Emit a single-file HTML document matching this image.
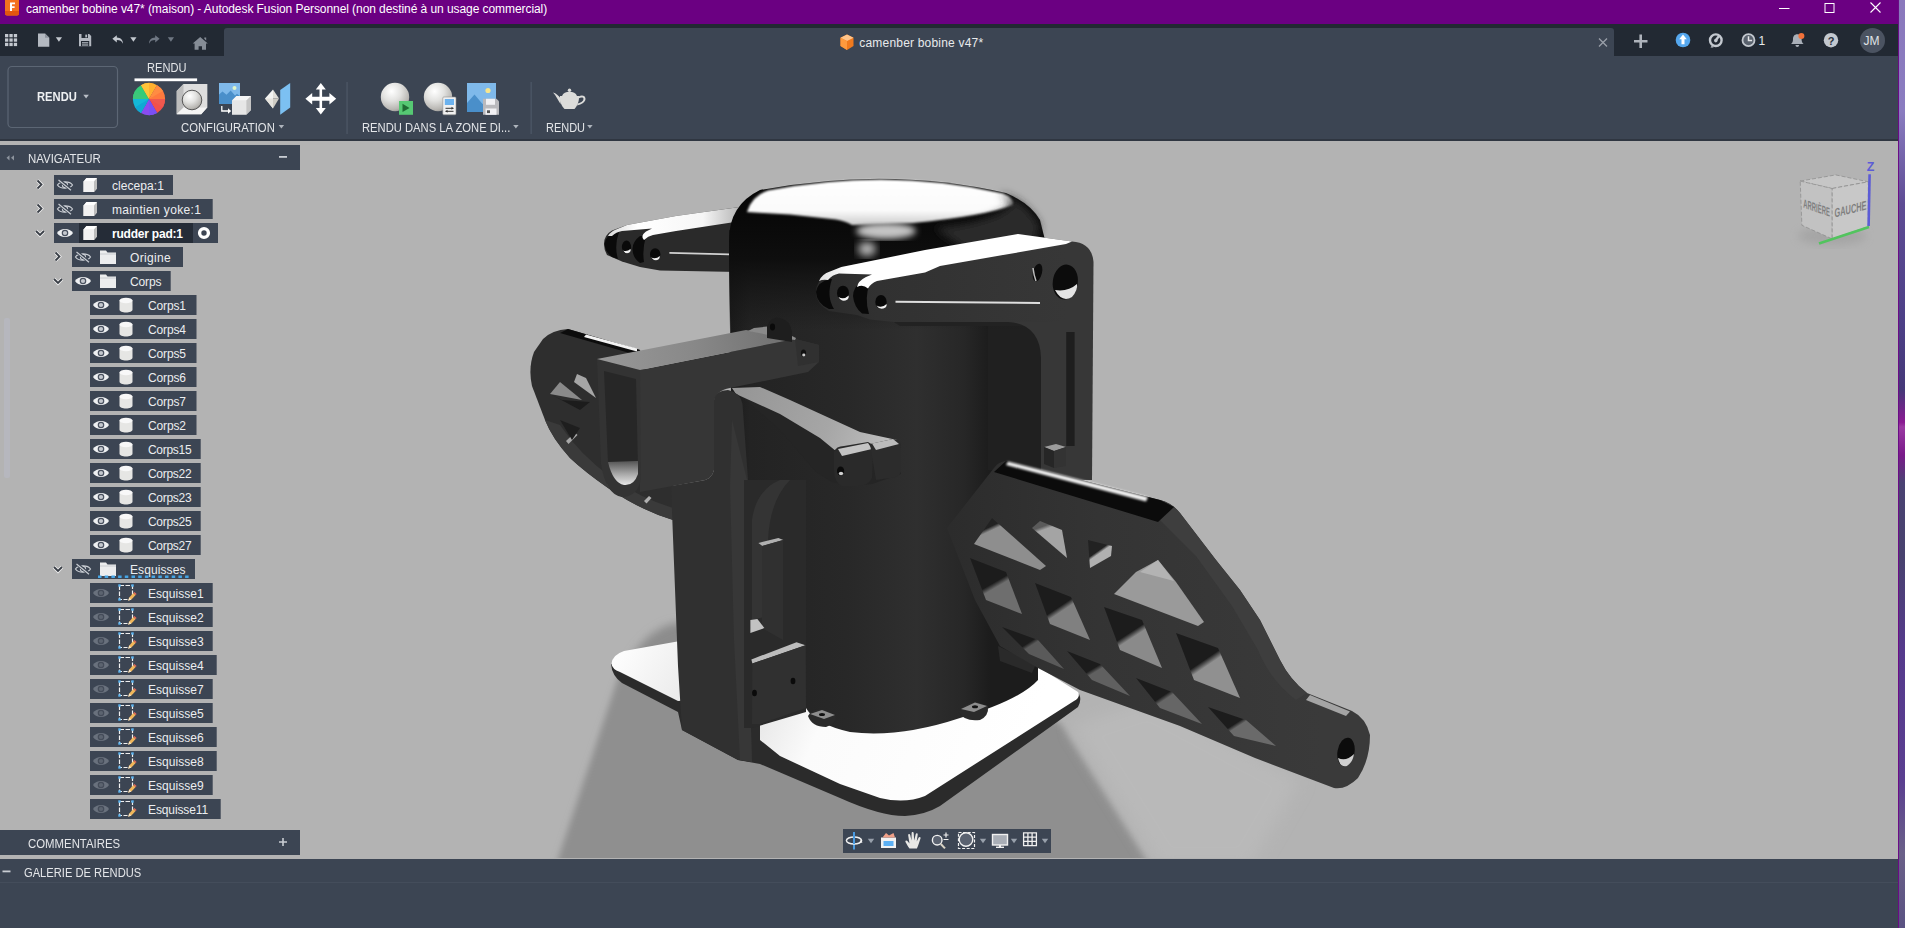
<!DOCTYPE html>
<html lang="fr">
<head>
<meta charset="utf-8">
<title>camenber bobine v47* (maison) - Autodesk Fusion Personnel</title>
<style>
*{box-sizing:border-box;margin:0;padding:0}
html,body{width:1905px;height:928px;overflow:hidden;background:#b3b3b3;font-family:"Liberation Sans",sans-serif;}
#app{position:absolute;left:0;top:0;width:1905px;height:928px;overflow:hidden}
.abs{position:absolute}
#wall{left:1898px;top:0;width:7px;height:928px;border-left:1px solid #6b0b86;background:linear-gradient(180deg,#8a78bc 0,#8a7cc0 12%,#5e4c94 22%,#4c3f86 35%,#453878 42%,#8a1a92 45.500%,#9a3aa2 46%,#7a1a8a 49%,#4a4272 52%,#48426e 60%,#553a8c 70%,#5a3f90 84%,#6a6088 92%,#5a5282 100%)}
#title{left:0;top:0;width:1898px;height:24px;background:#6b0082;color:#fff;font-size:12px}
#title .t{position:absolute;left:26px;top:2px;line-height:14px;white-space:nowrap;letter-spacing:-0.07px}
#row2{left:0;top:24px;width:1898px;height:32px;background:#222933}
#tabbar{left:224px;top:28px;width:1390px;height:28px;background:#3c4553;border-radius:3px 3px 0 0}
#ribbon{left:0;top:56px;width:1898px;height:85px;background:#3c4553}
#canvas{left:0;top:141px;width:1898px;height:718px;background:#b3b3b3}
#bottom{left:0;top:859px;width:1898px;height:69px;background:#3c4553}
.lbl{color:#e4e6e9;font-size:12px;white-space:nowrap;line-height:14px}
.navhdr{background:#3c4553;color:#e4e6e9;font-size:12px}
.row{position:absolute;height:20px;background:#3c4553;color:#eceef0;font-size:12px;line-height:20px;white-space:nowrap}
.row span{position:absolute;top:1px}
</style>
</head>
<body>
<div id="app">
<div id="wall" class="abs"></div>
<div id="title" class="abs"><div class="t">camenber bobine v47* (maison) - Autodesk Fusion Personnel (non destiné à un usage commercial)</div></div>
<div id="row2" class="abs"></div>
<div id="tabbar" class="abs"></div>
<div id="ribbon" class="abs"></div>
<div id="canvas" class="abs"></div>
<div id="rb" class="abs" style="left:0;top:138.500px;width:1898px;height:2.500px;background:#2f3641"></div>
<div id="bottom" class="abs"></div>
<!--CHROME-->
<svg class="abs" style="left:0;top:0" width="1898" height="141" viewBox="0 0 1898 141">
<defs>
<radialGradient id="sph" cx="0.38" cy="0.3" r="0.75"><stop offset="0" stop-color="#ffffff"/><stop offset="0.45" stop-color="#e2e2e0"/><stop offset="0.85" stop-color="#b8b6b2"/><stop offset="1" stop-color="#9a9894"/></radialGradient>
<linearGradient id="cubeo" x1="0" y1="0" x2="1" y2="1"><stop offset="0" stop-color="#ffb15a"/><stop offset="1" stop-color="#f06a12"/></linearGradient>
</defs>
<!-- app icon -->
<path d="M5 0h14v13.5q0 2-2 2h-10q-2 0-2-2z" fill="#f4711f"/>
<path d="M5 11h14v2.500q0 2-2 2h-10q-2 0-2-2z" fill="#e2560f"/>
<path d="M10 2.500h5v1.800h-3v2h2.600v1.700h-2.600v3h-2z" fill="#fff"/>
<!-- window controls -->
<path d="M1779 8.500h10.500" stroke="#fff" stroke-width="1"/>
<rect x="1825" y="3.500" width="9" height="9" fill="none" stroke="#fff" stroke-width="1"/>
<path d="M1870.500 2.500l10 10m0-10l-10 10" stroke="#fff" stroke-width="1.100"/>
<!-- QAT -->
<g fill="#c3c8cf">
<rect x="5" y="34" width="3.300" height="3.300"/><rect x="9.400" y="34" width="3.300" height="3.300"/><rect x="13.800" y="34" width="3.300" height="3.300"/>
<rect x="5" y="38.400" width="3.300" height="3.300"/><rect x="9.400" y="38.400" width="3.300" height="3.300"/><rect x="13.800" y="38.400" width="3.300" height="3.300"/>
<rect x="5" y="42.800" width="3.300" height="3.300"/><rect x="9.400" y="42.800" width="3.300" height="3.300"/><rect x="13.800" y="42.800" width="3.300" height="3.300"/>
</g>
<path d="M38 33.500h7l4.300 4.300v9h-11.300z" fill="#b4b9c1"/><path d="M45 33.500v4.300h4.300z" fill="#8e949e"/>
<path d="M55.800 37.200h6.200l-3.100 4.600z" fill="#c3c8cf"/>
<path d="M79 34h10.200l2 2v10.200h-12.200z" fill="#b4b9c1"/><rect x="81.500" y="34" width="6.500" height="4" fill="#222933"/><rect x="85.300" y="34.600" width="1.800" height="2.800" fill="#b4b9c1"/><rect x="81" y="41" width="8.200" height="5.200" fill="#222933"/><rect x="82" y="42.200" width="6.200" height="1.200" fill="#b4b9c1"/><rect x="82" y="44.400" width="6.200" height="1.200" fill="#b4b9c1"/>
<path d="M116.800 35.200l-4.400 3.600 4.400 3.600v-2.400c3.200 0 5 1 6.200 3.800 0-4-2.200-6.200-6.200-6.400z" fill="#c3c8cf"/>
<path d="M130.300 37.200h6.200l-3.100 4.600z" fill="#c3c8cf"/>
<path d="M155.200 35.200l4.400 3.600-4.400 3.600v-2.400c-3.200 0-5 1-6.200 3.800 0-4 2.200-6.200 6.200-6.400z" fill="#6f7783"/>
<path d="M167.800 37.200h6.200l-3.100 4.600z" fill="#6f7783"/>
<path d="M200.200 37l7.600 6.600h-1.800v6.200h-4v-3.600h-3.400v3.600h-4v-6.200h-1.900zM204.300 37.600h1.900v2.800l-1.900-1.600z" fill="#858c96"/>
<!-- tab -->
<path d="M847 34.500l6.500 3.200v8.300l-6.500 4-6.500-4v-8.300z" fill="#f07a1e"/><path d="M847 34.500l6.500 3.200-6.500 3.300-6.500-3.300z" fill="#ffc48a"/><path d="M847 41v9l-6.500-4v-8.300z" fill="#ff9a3d"/>
<path d="M1599 38.500l8 8m0-8l-8 8" stroke="#9aa0a9" stroke-width="1.300"/>
<path d="M1634 41.200h13.500M1640.700 34.500v13.500" stroke="#aeb3bb" stroke-width="2.600"/>
<!-- update -->
<circle cx="1683" cy="40" r="7.300" fill="#55a7ee"/><path d="M1683 34.600l3.800 4.600h-2.300v5h-3v-5h-2.300z" fill="#fff"/>
<!-- job status -->
<circle cx="1715.800" cy="40.200" r="5.800" fill="none" stroke="#c3c8cf" stroke-width="2.400"/><path d="M1715.800 40.200l3.200-4.200" stroke="#c3c8cf" stroke-width="2.400"/><circle cx="1715.800" cy="40.600" r="1.800" fill="#c3c8cf"/><path d="M1712 45.500l-1.500 2h3z" fill="#c3c8cf"/>
<!-- clock -->
<circle cx="1748.500" cy="40.200" r="6" fill="#59616d" stroke="#c3c8cf" stroke-width="1.800"/><path d="M1748.500 36.200v4.300h3.600" stroke="#e3e5e8" stroke-width="1.500" fill="none"/>
<!-- bell -->
<path d="M1797.300 34.200c3 0 4.300 2.300 4.300 5 0 2.600.8 3.700 2 4.800h-12.600c1.200-1.100 2-2.200 2-4.800 0-2.700 1.300-5 4.300-5z" fill="#a9afb8"/><path d="M1795.500 45h3.600c0 1.200-.8 1.900-1.800 1.900s-1.800-.7-1.800-1.900z" fill="#a9afb8"/><circle cx="1801.400" cy="36" r="3" fill="#f2713a"/>
<!-- help -->
<circle cx="1831" cy="40.200" r="7.200" fill="#c3c8cf"/>
<!-- avatar -->
<circle cx="1872.500" cy="40.400" r="12.500" fill="#4b5361"/>
<!-- RENDU button -->
<rect x="8" y="66.500" width="109.500" height="61" rx="4" fill="none" stroke="#5c6674" stroke-width="1.200"/>
<path d="M83.300 94.800h5.600l-2.800 3.600z" fill="#b9bec6"/>
<!-- tab underline -->
<rect x="134.500" y="78.400" width="62.600" height="2.800" fill="#fff"/>
<!-- color wheel -->
<g transform="translate(149 99.100) rotate(-30)">
<path d="M0 0L0-16.100A16.100 16.100 0 0 1 13.940-8.050z" fill="#ffb02e"/>
<path d="M0 0L13.940-8.050A16.100 16.100 0 0 1 13.940 8.050z" fill="#ff7a3d"/>
<path d="M0 0L13.940 8.050A16.100 16.100 0 0 1 0 16.100z" fill="#f2504c"/>
<path d="M0 0L0 16.100A16.100 16.100 0 0 1-13.940 8.050z" fill="#8a4cf0"/>
<path d="M0 0L-13.940 8.050A16.100 16.100 0 0 1-13.940-8.050z" fill="#14b8d8"/>
<path d="M0 0L-13.940-8.050A16.100 16.100 0 0 1 0-16.100z" fill="#34cc78"/>
<path d="M0 0L0-16.100A16.100 16.100 0 0 1 8.050-13.940z" fill="#ffc43a"/>
<path d="M0 0L13.940-8.050A16.100 16.100 0 0 1 16.100 0z" fill="#ff8c42"/>
<path d="M0 0L13.940 8.050A16.100 16.100 0 0 1 8.050 13.940z" fill="#f0584e"/>
<path d="M0 0L0 16.100A16.100 16.100 0 0 1-8.050 13.940z" fill="#7a50f4"/>
<path d="M0 0L-13.940 8.050A16.100 16.100 0 0 1-16.100 0z" fill="#10a8d4"/>
<path d="M0 0L-13.940-8.050A16.100 16.100 0 0 1-8.050-13.940z" fill="#3cc87a"/>
</g>
<!-- box sphere -->
<path d="M183.500 84h23.700v23.500l-6 6.700h-24.500v-23.200z" fill="#d9d9d9"/>
<path d="M183.500 84h23.700v23.500h-23.700z" fill="#dedede"/>
<path d="M176.700 91l6.800-7v23.500l-6.800 6.700z" fill="#bdbdbd"/>
<path d="M176.700 114.200l6.800-6.700h23.700l-6 6.700z" fill="#f4f4f4"/>
<circle cx="192" cy="100" r="9.800" fill="url(#sph)" stroke="#4a4a4a" stroke-width="0.900"/>
<!-- image + cube -->
<rect x="219" y="83" width="21" height="21" fill="#7fb9ea"/>
<path d="M219 104v-9.500l3.500-3 4 3.200 4.200-4.200 4.300 5 2-1.800 3 2.600v7.700z" fill="#4a8fca"/><circle cx="234.500" cy="88" r="2" fill="#dff5c8"/>
<path d="M232 100.500l4.500-4.500h14.500v14l-4.500 4.600h-14.500z" fill="#d6d6d6"/><path d="M232 100.500h14.500v14.100h-14.500z" fill="#e6e6e6"/><path d="M232 100.500l4.500-4.500h14.500l-4.500 4.500z" fill="#f6f6f6"/><path d="M246.500 100.500l4.500-4.500v14l-4.500 4.600z" fill="#c4c4c4"/>
<path d="M221.800 106v5h7" stroke="#fff" stroke-width="1.300" fill="none"/><path d="M228 108.300l3.200 2.700-3.200 2.700z" fill="#fff"/>
<!-- mirror -->
<path d="M265 98.500l8-9v19z" fill="#f4f4f2"/><path d="M273 89.500l6 9h-6z" fill="#e0ded8"/><path d="M273 98.500h6l-6 10z" fill="#cfccc4"/><path d="M265 98.500h8v10z" fill="#e6e4de"/>
<path d="M280.200 90l10-7v24.500l-10 7.200z" fill="#7cc0f2"/>
<!-- move -->
<g fill="#fff"><path d="M320.800 83l5 6.500h-3.700v7.300h7.300v-3.700l6.800 5.700-6.800 5.700v-3.700h-7.300v7.300h3.700l-5 6.500-5-6.500h3.700v-7.300h-7.300v3.700l-6.800-5.700 6.800-5.700v3.700h7.300v-7.300h-3.700z"/></g>
<path d="M278.700 125h5.400l-2.700 3.500z" fill="#aeb4bc"/>
<rect x="346.400" y="82" width="1.300" height="52" fill="#4d5766"/>
<!-- sphere play -->
<circle cx="395" cy="97" r="14.200" fill="url(#sph)"/>
<rect x="399" y="101" width="14" height="13.800" fill="#56c873"/><path d="M402.500 103.800l7 4.100-7 4.100z" fill="#1f6b33"/>
<circle cx="438" cy="97" r="14.200" fill="url(#sph)"/>
<rect x="442.800" y="97" width="13.200" height="17.800" rx="1" fill="#f1f1f1" stroke="#8d8d8d" stroke-width="0.600"/><rect x="444.800" y="99" width="9.200" height="6" fill="#6cb2ee"/><path d="M445.500 108.300h8M445.500 111.300h8" stroke="#333" stroke-width="1"/><path d="M451.500 106.800l2 1.500-2 1.500zM447.500 109.800l-2 1.500 2 1.500z" fill="#333"/>
<!-- image save -->
<rect x="467" y="83" width="29" height="29" fill="#7fb9ea"/><path d="M467 112v-9l7.500-8.500 8 9.500 2.500-2 11 10z" fill="#4a8fca"/><circle cx="488" cy="90.500" r="2.600" fill="#f7e58c"/>
<path d="M483 98.800h13.500l2.500 2.500v13.500h-16z" fill="#b9b9bd"/><rect x="486" y="98.800" width="9" height="6" fill="#f1f1f4"/><rect x="485.500" y="108.500" width="11" height="6.300" fill="#f1f1f4"/><rect x="487" y="110.300" width="3" height="2.800" fill="#555"/>
<path d="M513.200 125h5.400l-2.700 3.500z" fill="#aeb4bc"/>
<rect x="530.500" y="82" width="1.300" height="52" fill="#4d5766"/>
<!-- teapot -->
<g fill="#dcdcda"><path d="M560 96h19c.3 5.500-1.800 10-4.500 13h-10c-3-3-5-7.500-4.500-13z"/><path d="M562 96c1-3 4-4.200 7.500-4.200s6.500 1.200 7.500 4.200z"/><circle cx="569.500" cy="90.300" r="1.700"/><path d="M553 92.500c3 .5 5.500 3 8 6.500l-.5 5c-2.500-4-4.500-8.500-7.500-11.500z"/><path d="M578.500 96.500c3.500-2 7-.8 7 2.300 0 3.200-3.700 5.800-8.500 6.600l.7-1.900c3.300-.8 5.800-2.500 5.800-4.500 0-1.700-2.400-1.900-5-.6z"/></g>
<path d="M587.200 125h5.400l-2.700 3.500z" fill="#aeb4bc"/>
</svg>
<div class="abs lbl" id="t_tab" style="left:859.300px;top:35.500px;color:#e8eaec;letter-spacing:0.195px">camenber bobine v47*</div>
<div class="abs lbl" id="t_one" style="left:1758.500px;top:34px;color:#e8eaec">1</div>
<div class="abs lbl" id="t_q" style="left:1827.700px;top:33.500px;color:#2a313c;font-weight:bold;font-size:11px">?</div>
<div class="abs lbl" id="t_jm" style="left:1863.500px;top:33.500px;color:#e0e3e7">JM</div>
<div class="abs lbl" id="t_rb" style="left:37.400px;top:89.500px;font-weight:bold;color:#eef0f2;transform:scaleX(0.933);transform-origin:0 0">RENDU</div>
<div class="abs lbl" id="t_rt" style="left:146.700px;top:60.800px;transform:scaleX(0.923);transform-origin:0 0">RENDU</div>
<div class="abs lbl" id="t_cf" style="left:180.500px;top:120.900px;transform:scaleX(0.94);transform-origin:0 0">CONFIGURATION</div>
<div class="abs lbl" id="t_rz" style="left:361.600px;top:120.900px;transform:scaleX(0.9345);transform-origin:0 0">RENDU DANS LA ZONE DI...</div>
<div class="abs lbl" id="t_r2" style="left:545.600px;top:120.900px;transform:scaleX(0.914);transform-origin:0 0">RENDU</div>
<!--/CHROME-->
<!--MODEL-->
<svg class="abs" style="left:0;top:141px" width="1898" height="717" viewBox="0 141 1898 717"><defs><filter id="b2" x="-20%" y="-20%" width="140%" height="140%"><feGaussianBlur stdDeviation="2"/></filter><filter id="b4" x="-20%" y="-20%" width="140%" height="140%"><feGaussianBlur stdDeviation="4"/></filter><filter id="b8" x="-30%" y="-30%" width="160%" height="160%"><feGaussianBlur stdDeviation="8"/></filter><filter id="b3" x="-10%" y="-10%" width="120%" height="120%"><feGaussianBlur stdDeviation="3"/></filter><filter id="b1" x="-20%" y="-20%" width="140%" height="140%"><feGaussianBlur stdDeviation="1"/></filter><linearGradient id="pl1" gradientUnits="userSpaceOnUse" x1="611" y1="650" x2="690" y2="700"><stop offset="0" stop-color="#ffffff"/><stop offset="1" stop-color="#e9e9e9"/></linearGradient><linearGradient id="pl2" gradientUnits="userSpaceOnUse" x1="760" y1="700" x2="1000" y2="800"><stop offset="0" stop-color="#e6e6e6"/><stop offset="0.25" stop-color="#fbfbfb"/><stop offset="1" stop-color="#ffffff"/></linearGradient><linearGradient id="la" gradientUnits="userSpaceOnUse" x1="604" y1="0" x2="736" y2="0"><stop offset="0" stop-color="#d4d4d4"/><stop offset="0.25" stop-color="#ffffff"/><stop offset="0.75" stop-color="#f6f6f6"/><stop offset="1" stop-color="#bcbcbc"/></linearGradient><linearGradient id="cyl" gradientUnits="userSpaceOnUse" x1="729" y1="0" x2="990" y2="0"><stop offset="0" stop-color="#1a1a1a"/><stop offset="0.08" stop-color="#232323"/><stop offset="0.45" stop-color="#282828"/><stop offset="0.72" stop-color="#2f2f2f"/><stop offset="0.9" stop-color="#272727"/><stop offset="1" stop-color="#1c1c1c"/></linearGradient><linearGradient id="capd" gradientUnits="userSpaceOnUse" x1="0" y1="200" x2="0" y2="330"><stop offset="0" stop-color="#060606"/><stop offset="0.450" stop-color="#0e0e0e"/><stop offset="1" stop-color="#141414" stop-opacity="0"/></linearGradient><linearGradient id="capw" gradientUnits="userSpaceOnUse" x1="0" y1="178" x2="0" y2="232"><stop offset="0" stop-color="#ffffff"/><stop offset="0.6" stop-color="#fbfbfb"/><stop offset="1" stop-color="#b4b4b4"/></linearGradient><linearGradient id="ras" gradientUnits="userSpaceOnUse" x1="815" y1="0" x2="1066" y2="0"><stop offset="0" stop-color="#2a2a2a"/><stop offset="0.25" stop-color="#313131"/><stop offset="1" stop-color="#373737"/></linearGradient><linearGradient id="ra" gradientUnits="userSpaceOnUse" x1="816" y1="0" x2="1072" y2="0"><stop offset="0" stop-color="#dcdcdc"/><stop offset="0.12" stop-color="#ffffff"/><stop offset="1" stop-color="#ffffff"/></linearGradient><linearGradient id="uh" gradientUnits="userSpaceOnUse" x1="0" y1="462" x2="0" y2="486"><stop offset="0" stop-color="#5a5a5a"/><stop offset="0.5" stop-color="#a8a8a8"/><stop offset="1" stop-color="#ececec"/></linearGradient><linearGradient id="bt" gradientUnits="userSpaceOnUse" x1="597" y1="360" x2="795" y2="340"><stop offset="0" stop-color="#989898"/><stop offset="0.5" stop-color="#888888"/><stop offset="1" stop-color="#6e6e6e"/></linearGradient><linearGradient id="ma" gradientUnits="userSpaceOnUse" x1="740" y1="389" x2="890" y2="440"><stop offset="0" stop-color="#969696"/><stop offset="0.6" stop-color="#a6a6a6"/><stop offset="1" stop-color="#bebebe"/></linearGradient><linearGradient id="pedg" gradientUnits="userSpaceOnUse" x1="950" y1="0" x2="1320" y2="0"><stop offset="0" stop-color="#2c2c2c"/><stop offset="0.4" stop-color="#343434"/><stop offset="1" stop-color="#3a3a3a"/></linearGradient><linearGradient id="c17" gradientUnits="userSpaceOnUse" x1="990" y1="518" x2="1004" y2="548"><stop offset="0" stop-color="#222"/><stop offset="0.24" stop-color="#222"/><stop offset="0.36" stop-color="#8e8e8e"/><stop offset="1" stop-color="#8e8e8e"/></linearGradient><linearGradient id="c18" gradientUnits="userSpaceOnUse" x1="1044" y1="520" x2="1054" y2="548"><stop offset="0" stop-color="#5a5a5a"/><stop offset="0.19" stop-color="#5a5a5a"/><stop offset="0.31" stop-color="#a4a4a4"/><stop offset="1" stop-color="#a4a4a4"/></linearGradient><linearGradient id="c19" gradientUnits="userSpaceOnUse" x1="1092" y1="542" x2="1106" y2="562"><stop offset="0" stop-color="#222"/><stop offset="0.44" stop-color="#222"/><stop offset="0.56" stop-color="#b0b0b0"/><stop offset="1" stop-color="#b0b0b0"/></linearGradient><linearGradient id="c20" gradientUnits="userSpaceOnUse" x1="1050" y1="590" x2="1074" y2="626"><stop offset="0" stop-color="#1c1c1c"/><stop offset="0.44" stop-color="#1c1c1c"/><stop offset="0.56" stop-color="#808080"/><stop offset="1" stop-color="#808080"/></linearGradient><linearGradient id="c21" gradientUnits="userSpaceOnUse" x1="1120" y1="614" x2="1146" y2="654"><stop offset="0" stop-color="#1c1c1c"/><stop offset="0.44" stop-color="#1c1c1c"/><stop offset="0.56" stop-color="#8a8a8a"/><stop offset="1" stop-color="#8a8a8a"/></linearGradient><linearGradient id="c22" gradientUnits="userSpaceOnUse" x1="1192" y1="640" x2="1222" y2="684"><stop offset="0" stop-color="#1c1c1c"/><stop offset="0.44" stop-color="#1c1c1c"/><stop offset="0.56" stop-color="#909090"/><stop offset="1" stop-color="#909090"/></linearGradient><linearGradient id="c23" gradientUnits="userSpaceOnUse" x1="1018" y1="632" x2="1036" y2="660"><stop offset="0" stop-color="#1c1c1c"/><stop offset="0.44" stop-color="#1c1c1c"/><stop offset="0.56" stop-color="#5a5a5a"/><stop offset="1" stop-color="#5a5a5a"/></linearGradient><linearGradient id="c24" gradientUnits="userSpaceOnUse" x1="1084" y1="656" x2="1102" y2="686"><stop offset="0" stop-color="#1c1c1c"/><stop offset="0.44" stop-color="#1c1c1c"/><stop offset="0.56" stop-color="#606060"/><stop offset="1" stop-color="#606060"/></linearGradient><linearGradient id="c25" gradientUnits="userSpaceOnUse" x1="1152" y1="684" x2="1172" y2="714"><stop offset="0" stop-color="#1c1c1c"/><stop offset="0.44" stop-color="#1c1c1c"/><stop offset="0.56" stop-color="#666"/><stop offset="1" stop-color="#666"/></linearGradient><linearGradient id="c26" gradientUnits="userSpaceOnUse" x1="1226" y1="712" x2="1244" y2="740"><stop offset="0" stop-color="#1c1c1c"/><stop offset="0.44" stop-color="#1c1c1c"/><stop offset="0.56" stop-color="#6a6a6a"/><stop offset="1" stop-color="#6a6a6a"/></linearGradient><linearGradient id="c27" gradientUnits="userSpaceOnUse" x1="984" y1="566" x2="1006" y2="604"><stop offset="0" stop-color="#1c1c1c"/><stop offset="0.44" stop-color="#1c1c1c"/><stop offset="0.56" stop-color="#6e6e6e"/><stop offset="1" stop-color="#6e6e6e"/></linearGradient></defs>
<path d="M620 672 L700 640 L1000 690 L1061 724 L1152 868 L555 868Z" fill="#8f8f8f" filter="url(#b3)"/>
<path d="M625 668 Q650 620 690 622 L690 690 Z" fill="#8c8c8c" filter="url(#b4)"/>
<path d="M1072 726 L1150 700 L1300 780 L1250 866 L1160 866Z" fill="#b9b9b9" filter="url(#b8)"/>
<path d="M611 664 Q612 676 622 683 L678 712 L682 730 L738 760 L760 764 L840 798 Q880 816 905 816 Q925 815 940 806 L1078 707 Q1082 700 1079 694 L1040 680 L700 640 Z" fill="#2b2b2b" />
<path d="M611.500 664 Q612 655 624 651 L680 641 L690 700 L678 701 L620 672 Q612 669 611.500 664Z" fill="url(#pl1)" />
<path d="M760 724 L806 706 L1040 668 L1078 692 Q1081 697 1074 701 L925 796 Q905 804 880 798 L840 784 L780 756 L760 740 Z" fill="url(#pl2)" />
<path d="M543 339 Q552 330 568 329 L640 350 L672 486 L673 520 Q640 510 608 488 Q585 472 570 458 Q552 438 545 420 L532 386 Q528 368 534 352 Z" fill="#2e2e2e" />
<path d="M545 420 Q552 438 570 458 Q585 472 608 488 Q640 510 673 520 L673 508 Q640 498 612 478 Q580 455 560 425 Z" fill="#3a3a3a" />
<path d="M568 329 L640 350 L640 356 L560 333Z" fill="#0c0c0c" />
<path d="M586 334.5 L637 348.5 L637 351.5 L584 337Z" fill="#f2f2f2" />
<path d="M577 374 L586 378 L596 398 L574 382Z" fill="#a6a6a6" />
<path d="M550 394 L560 382 L582 400Z" fill="#8a8a8a" />
<path d="M566 441 L575 432.5 L577.5 435 L568.5 444Z" fill="#a8a8a8" />
<path d="M552 395 L562 400 L590 402 L580 410Z" fill="#1c1c1c" />
<path d="M560 420 L580 428 L572 440Z" fill="#1e1e1e" />
<path d="M644 501 L649 496 L651.5 498 L646.5 503.5Z" fill="#b0b0b0" />
<path d="M607 484 L611 481 L613 484 L609 487Z" fill="#a0a0a0" />
<path d="M604 244 Q604 235 612 230.500 L627 225 L676 216 L738 207.200 L738 272 L660 270.500 L640 267 L622 261.500 L607 255 Q604 250 604 244Z" fill="#2a2a2a" />
<path d="M616 232 Q605 236 604.500 244 Q605 252 612 257 L618 259 Q614 246 619 232Z" fill="#0a0a0a" />
<path d="M640 236 Q632 242 632.500 250 Q633 258 640 263 L644 262 Q642 250 646 236 Z" fill="#0a0a0a" />
<path d="M608 236 Q610 232 616 229.500 L627 225 L676 216 L738 207.200 L738 221.500 L676 231 L653 235 Q648 236 644 240 Q640 236 646 231.500 L652 228.400 L622 231 Q616 232 612 236Z" fill="url(#la)" />
<ellipse cx="626.500" cy="247" rx="4.600" ry="6.500" fill="#090909"/>
<path d="M623 250.500 Q626 255 630 252 Q631 250.500 630.500 249 Q627 252 623 250.500Z" fill="#f0f0f0" />
<ellipse cx="655.200" cy="254.300" rx="5.200" ry="6" fill="#090909"/>
<path d="M651 257.500 Q655 262 659 259 Q660 257.500 659.800 256 Q656 259.500 651 257.500Z" fill="#f0f0f0" />
<path d="M669.4 252 L729.2 253.5 L729.2 255.3 L669.4 253.7Z" fill="#d2d2d2" />
<path d="M729 230 L990 230 L1038 300 L1038 680 Q1020 700 960 718 Q900 738 850 732 Q815 724 806 708 L806 480 L732 480 Z" fill="url(#cyl)" />
<path d="M988 300 L1042 300 L1042 470 L988 470Z" fill="#202020" />
<path d="M729 240 Q729 205 760 190 Q890 166 1006 193 Q1030 203 1040 220 L1045 240 L1045 330 L729 330 Z" fill="url(#capd)" />
<path d="M747 212 Q752 196 768 190.500 Q890 167 1003 193.500 Q1014 198 1013 205 Q985 216 913 223 L852 225 Q846 221 836 219.500 L790 214.500 Z" fill="url(#capw)" filter="url(#b1)"/>
<path d="M1000 193 Q1026 200 1040 226 L1034 246 L975 256 L935 228 Q995 222 1012 204Z" fill="#2c2c2c" filter="url(#b4)"/>
<ellipse cx="886" cy="231" rx="30" ry="8" fill="#c4c4c4" filter="url(#b3)"/>
<ellipse cx="867" cy="249" rx="9" ry="7" fill="#bdbdbd" filter="url(#b4)"/>
<path d="M1041 300 L1041 246 L1072 241.500 Q1092 243 1093.500 262 L1092 480 L1041 480 Z" fill="#373737" />
<path d="M1066.2 332 L1074.6 332 L1074.6 446 L1066.2 446Z" fill="#1e1e1e" />
<path d="M816 292 Q816 281 828 273 L841 267 L1018 234 L1072 241.500 L1066 244 L1066 322 L894 322 L870 319.600 L857 315 L829 311 Q816 304 816 292Z" fill="url(#ras)" />
<path d="M830 279 Q817 282 816 292 Q817 304 829 309 L834 309 Q826 296 832 279Z" fill="#090909" />
<path d="M861 281.500 Q853 288 853 296 Q854 307 862 313.500 L869 314 Q864 298 870 283 Z" fill="#090909" />
<path d="M819 281 Q822 274 830 271.500 L841.400 267 L925 250 L1018 234 L1072 241.500 L1066 244 L940 266 L925 272.400 L877 281 Q871 283 868 288.500 Q863 284 857 287 Q858 281 866 277 L872 274.400 L839 273.600 Q832 275 828 280 Q823 279 819 281Z" fill="url(#ra)" />
<ellipse cx="843" cy="293" rx="6" ry="7.300" fill="#080808"/>
<path d="M838.500 297 Q842 303 847.500 299.500 Q849 297.500 848.800 295.500 Q844 300 838.500 297Z" fill="#f4f4f4" />
<ellipse cx="881" cy="301.900" rx="5.700" ry="6.900" fill="#080808"/>
<path d="M876.500 305.500 Q880 311 885.500 307.500 Q887 306 886.600 304 Q882 308.500 876.500 305.500Z" fill="#f4f4f4" />
<path d="M895.5 300.7 L1040 302 L1040 304 L895.5 302.7Z" fill="#dedede" />
<path d="M894 322 L1041 322 L1041 326 L900 326Z" fill="#222222" />
<path d="M1008 322 Q1040 324 1041 358 L1041 322 Z" fill="#373737" />
<ellipse cx="1065.300" cy="282" rx="12.500" ry="17.500" fill="#0c0c0c" transform="rotate(8 1065.300 282)"/>
<path d="M1055 290 Q1062 303 1072 297 Q1078 290 1077 284 Q1068 292 1055 290Z" fill="#e4e4e4" />
<ellipse cx="1037.500" cy="272.500" rx="4.500" ry="9" fill="#0c0c0c" transform="rotate(14 1037.500 272.500)"/>
<path d="M1033 268 Q1034 276 1036 281" fill="none" stroke="#bdbdbd" stroke-width="1.500"/>
<path d="M1044 447 L1056 444 L1066 447 L1054 451Z" fill="#9c9c9c" />
<path d="M1044 447 L1054 451 L1054 468 L1044 464Z" fill="#262626" />
<path d="M1054 451 L1066 447 L1066 466 L1054 468Z" fill="#333" />
<path d="M640 370 L795 339 L819 345 L819 362 L808 372 L730 388 Q716 390 714 402 L714 470 Q712 480 700 481 L640 492 Z" fill="#363636" />
<path d="M597 359 L640 370 L641 478 Q638 497 622 497 Q606 495 601 464 Z" fill="#333333" />
<path d="M604 371 L636 379 L638 470 L608 462Z" fill="#272727" />
<path d="M608 462 L638 461 L638 474 Q634 486 624 485 Q613 483 608 462Z" fill="url(#uh)" />
<path d="M597 359 L746 330 L795 339 L640 370Z" fill="url(#bt)" />
<path d="M795 339 L819 345 L819 362 L798 366Z" fill="#303030" />
<path d="M754 328 L772 326 L796 338 L795 340 L748 331Z" fill="#8a8a8a" />
<ellipse cx="803.500" cy="353" rx="2.600" ry="3.600" fill="#111"/><ellipse cx="803.800" cy="355" rx="1.600" ry="1.400" fill="#ccc"/>
<path d="M767 338 L767 326 Q771 316 780 318 Q790 320 792 332 L792 342 Z" fill="#1e1e1e" />
<ellipse cx="772.500" cy="327" rx="2.600" ry="3.400" fill="#0a0a0a"/>
<path d="M736 394 L746 400 L780 430 L816 472 L832 482 L848 486 L872 484 L901 474 L901 444 L860 432 L790 400 L740 389 Z" fill="#252525" />
<path d="M732 388 L760 387 L790 400 L860 432 L897 440 L872 447 L834.600 450 L820 438 L780 414 L736 394 Z" fill="url(#ma)" />
<path d="M834 452 Q836 446 844 446 L868 442 Q874 444 873 452 L872 478 Q868 486 858 486 L842 486 Q834 482 834 470Z" fill="#2a2a2a" />
<path d="M838 449 L868 443 L872 449 L842 456Z" fill="#c4c4c4" />
<path d="M870 444 L893 439 Q902 440 901 448 L901 472 Q898 478 890 478 L876 480 Z" fill="#2c2c2c" />
<path d="M872 443.5 L893 439 L899 444 L876 450Z" fill="#bcbcbc" />
<ellipse cx="840.600" cy="471" rx="3.600" ry="4.600" fill="#0a0a0a"/><ellipse cx="841" cy="473.500" rx="2.200" ry="1.800" fill="#d0d0d0"/>
<path d="M714 400 Q716 390 728 390 Q740 392 742.500 404 L748.500 486 L748.500 640 L752 762 L738 760 L682 730 L678 666 L671 486 L700 481 Q712 480 714 470 Z" fill="#303030" />
<path d="M732 420 L748.5 486 L748.5 640 L752 762 L740 760 L734 640 L730 486Z" fill="#373737" />
<path d="M744 480 L806 480 L806 712 L752 728 L744 728Z" fill="#2a2a2a" />
<path d="M752 520 Q756 490 780 480 L790 480 Q770 500 768 540 L768 616 L752 620Z" fill="#343434" />
<path d="M758.4 543 L778.4 538 L783.4 540 L762.4 546Z" fill="#b0b0b0" />
<path d="M762 546 L783 540 L783 640 L762 628Z" fill="#303030" />
<path d="M750.4 620 L757.4 619 L764.4 628 L750.4 633Z" fill="#c2c2c2" />
<path d="M751.4 659.4 L796.5 642.3 L805.5 645.3 L752.4 663.4Z" fill="#bcbcbc" />
<path d="M752.4 663.4 L805.5 645.3 L806 708 L760 724 L752 724Z" fill="#303030" />
<ellipse cx="754.500" cy="693" rx="2.400" ry="3.200" fill="#0a0a0a"/><ellipse cx="793" cy="681" rx="2.400" ry="3.200" fill="#0a0a0a"/>
<path d="M808 716 Q812 708 824 710 L836 716 Q836 724 826 727 Q812 727 808 716Z" fill="#2a2a2a" />
<path d="M810 714 L822 710 L835 715 L824 719Z" fill="#8e8e8e" />
<ellipse cx="822" cy="714.500" rx="3" ry="1.500" fill="#111"/>
<path d="M959 712 Q962 704 976 702 L988 706 Q989 716 980 720 Q964 722 959 712Z" fill="#2a2a2a" />
<path d="M961 709 L975 702.5 L987 706 L974 712Z" fill="#8e8e8e" />
<ellipse cx="975" cy="706.800" rx="3" ry="1.500" fill="#111"/>
<path d="M998 646 L1036 664 L1032 673 L1000 661Z" fill="#2a2a2a" />
<path d="M947 528 L994 468 Q998 462 1006 461 L1160 500 Q1172 503 1180 513 L1216 560 L1240 590 L1260 620 L1280 660 Q1290 680 1307 693 L1352 711 Q1366 718 1370 735 Q1370 760 1358 778 Q1346 790 1334 788 L1255 758 L1180 726 L1080 690 L1038 668 L1000 646 L975 600 Z" fill="url(#pedg)" />
<path d="M1160 500 Q1172 503 1180 513 L1216 560 L1240 590 L1260 620 L1280 660 Q1290 680 1307 693 L1296 700 Q1270 680 1258 650 L1232 606 L1196 556 L1156 516 Z" fill="#3e3e3e" />
<path d="M994 472 L1006 461 L1160 500 L1174 507 L1158 522Z" fill="#0b0b0b" />
<path d="M1008 461.5 L1148 497 L1146 501.5 L1006 465Z" fill="#f0f0f0" filter="url(#b1)"/>
<path d="M1310 695 L1350 711.5 L1346 716 L1306 700Z" fill="#a4a4a4" />
<ellipse cx="1346" cy="752" rx="8.500" ry="14.500" fill="#0c0c0c" transform="rotate(10 1346 752)"/>
<path d="M1338 758 Q1340 768 1347 766 Q1353 762 1354 754 Q1346 762 1338 758Z" fill="#cfcfcf" />
<path d="M974 544 L992 518 L1046 566 L1040 570Z" fill="url(#c17)" />
<path d="M1032 528 L1040 521 L1062 530 L1067 558Z" fill="url(#c18)" />
<path d="M1088 540 L1112 546 L1111 556 L1090 568Z" fill="url(#c19)" />
<path d="M1114 594 L1136 572 L1158 560 L1176 582 L1204 622 L1198 626Z" fill="#9a9a9a" />
<path d="M1140 572 L1158 560 L1174 581Z" fill="#b3b3b3" />
<path d="M1035 583 L1071 597 L1090 640 L1050 624Z" fill="url(#c20)" />
<path d="M1104 607 L1142 620 L1162 668 L1120 650Z" fill="url(#c21)" />
<path d="M1176 633 L1218 648 L1240 698 L1194 680Z" fill="url(#c22)" />
<path d="M1002 627 L1038 640 L1064 669 L1029 654Z" fill="url(#c23)" />
<path d="M1067 651 L1100 664 L1130 696 L1092 680Z" fill="url(#c24)" />
<path d="M1136 678 L1172 692 L1202 724 L1160 708Z" fill="url(#c25)" />
<path d="M1208 707 L1246 720 L1276 746 L1234 736Z" fill="url(#c26)" />
<path d="M970 558 L1006 572 L1022 614 L986 600Z" fill="url(#c27)" />
</svg>
<!--/MODEL-->
<!--EXTRAS-->
<svg class="abs" style="left:0;top:141px" width="1898" height="787" viewBox="0 141 1898 787"><defs>
<g id="dd"><path d="M-3.200-2.200h6.400l-3.200 4.400z" fill="#98a0ab"/></g></defs>
<rect x="843" y="829" width="208" height="24" fill="#3c4553"/>
<path d="M854 832v17.500" stroke="#4a9ae0" stroke-width="2"/><ellipse cx="854" cy="840.500" rx="7.600" ry="3.600" fill="none" stroke="#f0f0f0" stroke-width="1.500"/><path d="M854 836v8" stroke="#4a9ae0" stroke-width="2"/><path d="M859 843l3.500-.5-1.500-3z" fill="#f0f0f0"/>
<use href="#dd" x="871" y="841"/>
<path d="M881 837.500h15v10.500h-15z" fill="#f2f2f2"/><path d="M883.500 841h10v5h-10z" fill="#5cb0f4"/><path d="M882.500 837.500l3.500-4.500 3 2.500 4.500-2.500 1.500 4.500z" fill="#f0a088"/>
<path d="M909.500 848.500c-1.500-2-3-4.500-4-6.500-.6-1.300 1-2.200 1.900-1l2.100 2.600-1.300-8.200c-.2-1.500 1.700-1.800 2-.4l1.300 5.600.1-7.400c0-1.500 2-1.500 2.100 0l.5 7.300 1.500-6.300c.4-1.400 2.200-1 2 .5l-1 6.900 2-4c.7-1.300 2.300-.5 1.800.9-1.200 3.400-2 6.600-3.600 10z" fill="#e8e8e6"/>
<circle cx="937.200" cy="840.200" r="4.800" fill="#5a6270" stroke="#f0f0f0" stroke-width="1.400"/><path d="M940.800 844l4.200 4.400" stroke="#d8d2c4" stroke-width="2"/><path d="M943.500 835h5M946 832.500v5M943.500 839.500h5" stroke="#f0f0f0" stroke-width="1.200"/>
<rect x="958.500" y="832.500" width="16" height="16" fill="none" stroke="#f0f0f0" stroke-width="1.200" stroke-dasharray="3 1.600"/><circle cx="966" cy="839.500" r="6.800" fill="#5a6270" stroke="#f0f0f0" stroke-width="1.400"/>
<use href="#dd" x="983" y="841"/>
<rect x="992.500" y="834.500" width="15" height="10.500" fill="#a9aeb6" stroke="#f0f0f0" stroke-width="1.400"/><path d="M996 847.300h8" stroke="#f0f0f0" stroke-width="1.400"/><path d="M1000 845v2" stroke="#f0f0f0" stroke-width="2"/>
<use href="#dd" x="1014" y="841"/>
<path d="M1023.600 832.800h12.800v12.800h-12.800zM1027.900 832.800v12.800M1032.100 832.800v12.800M1023.600 837.100h12.800M1023.600 841.300h12.800" fill="none" stroke="#f0f0f0" stroke-width="1.300"/>
<use href="#dd" x="1045" y="841"/>
<rect x="0" y="859" width="1898" height="69" fill="#3c4553"/><rect x="0" y="882" width="1898" height="1" fill="#444d5b"/>
<rect x="2.500" y="870.500" width="8" height="1.800" fill="#c9cdd3"/>
<ellipse cx="1832" cy="236" rx="34" ry="9" fill="#9a9a9a" opacity="0.550" filter="url(#b4)"/>
<path d="M1800.200 181.100L1835.700 174.900L1868.300 181.800L1832.200 188.500Z" fill="#c6c6c6" stroke="#8a8a8a" stroke-width="0.700" stroke-dasharray="4 2"/>
<path d="M1800.200 181.100L1832.200 188.500L1832.200 238.900L1801.900 225.300Z" fill="#c2c2c2" stroke="#8a8a8a" stroke-width="0.700" stroke-dasharray="4 2"/>
<path d="M1832.200 188.500L1868.300 181.800L1868.300 226.500L1832.200 238.900Z" fill="#c8c8c8" stroke="#8a8a8a" stroke-width="0.700" stroke-dasharray="4 2"/>
<path d="M1869.600 174.300L1868.600 226" stroke="#5c5cd6" stroke-width="2.600"/>
<path d="M1869 227L1819 243.500" stroke="#52c45e" stroke-width="2.600"/>
<text x="0" y="0" transform="matrix(0.780 0.270 0 1.450 1803.300 207.500)" font-family="Liberation Sans, sans-serif" font-size="8.500" font-weight="bold" fill="#7f7f7f" textLength="34" lengthAdjust="spacingAndGlyphs">ARRIÈRE</text>
<text x="0" y="0" transform="matrix(0.800 -0.200 0 1.500 1834.500 217.500)" font-family="Liberation Sans, sans-serif" font-size="8.500" font-weight="bold" fill="#7f7f7f" textLength="40" lengthAdjust="spacingAndGlyphs">GAUCHE</text>
<text x="1866.800" y="171.300" font-family="Liberation Sans, sans-serif" font-size="12.500" font-weight="bold" fill="#5c5cd6">Z</text>
</svg>
<div class="abs lbl" id="t_gal" style="left:24px;top:865.500px;transform:scaleX(0.930);transform-origin:0 0">GALERIE DE RENDUS</div>
<!--/EXTRAS-->
<!--NAV-->
<svg class="abs" style="left:0;top:141px" width="320" height="717" viewBox="0 141 320 717"><defs>
<g id="eyev"><path d="M-8 0C-5-5.200 5-5.200 8 0 5 5.200-5 5.200-8 0z" fill="#eef0f2"/><circle r="2.700" fill="#c4c8ce" stroke="#4a5260" stroke-width="1.200"/></g>
<g id="eyed"><path d="M-8 0C-5-5.200 5-5.200 8 0 5 5.200-5 5.200-8 0z" fill="#69717d"/><circle r="2.700" fill="#5c6470" stroke="#454d5a" stroke-width="1.200"/></g>
<g id="eyeh"><path d="M-7.500 0C-5-4.200 5-4.200 7.500 0 5 4.200-5 4.200-7.500 0z" fill="none" stroke="#c9cdd3" stroke-width="1.200"/><circle r="2.600" fill="none" stroke="#c9cdd3" stroke-width="1.100"/><path d="M-6-5L6 5" stroke="#3c4553" stroke-width="3"/><path d="M-6.500-5L6 5.200" stroke="#c9cdd3" stroke-width="1.200"/></g>
<g id="comp"><path d="M-6.500-3.500l3-3.500h10.500v10.500l-3 3.500h-10.500z" fill="#d9d9d9"/><path d="M-6.500-3.500h10.500v10.500h-10.500z" fill="#f1f1f1"/><path d="M-6.500-3.500l3-3.500h10.500l-3 3.500z" fill="#ffffff"/><path d="M4-3.500l3-3.500v10.500l-3 3.500z" fill="#bdbdbd"/></g>
<g id="fold"><path d="M-8-6.500h6l1.500 2h8.500v11.500h-16z" fill="#ecedee"/><path d="M-8-3h16" stroke="#c2c4c8" stroke-width="0.800"/></g>
<g id="body"><path d="M-6.500-4.500v9c0 1.800 3 3 6.500 3s6.500-1.200 6.500-3v-9z" fill="#e6e6e4"/><ellipse cx="0" cy="-4.500" rx="6.500" ry="2.800" fill="#f8f8f8"/></g>
<g id="sk"><path d="M-6.500-7.500h13v12M-6.500-7.500v14h8" fill="none" stroke="#f0f0f0" stroke-width="1.200" stroke-dasharray="4.500 1.500"/><rect x="-7.700" y="-8.700" width="2.400" height="2.400" fill="#5ab4f0"/><rect x="5.300" y="-8.700" width="2.400" height="2.400" fill="#5ab4f0"/><rect x="-7.700" y="5.300" width="2.400" height="2.400" fill="#5ab4f0"/><path d="M2.200 7.800l1-3.200 4.200-4.600 2.200 2-4.200 4.600z" fill="#f0b65a"/><path d="M2.200 7.800l1-3.200 2.200 2z" fill="#f6e6c8"/><path d="M7.400 0l1-1.100 2.200 2-1 1.100z" fill="#e86a5a"/></g>
<g id="ar"><path d="M-2.500-3.500l4 4-4 4" fill="none" stroke="#f2f2f2" stroke-width="3.400"/><path d="M-2.500-3.500l4 4-4 4" fill="none" stroke="#3a3f47" stroke-width="1.800"/></g>
<g id="ad"><path d="M-4-2l4 4 4-4" fill="none" stroke="#f2f2f2" stroke-width="3.400"/><path d="M-4-2l4 4 4-4" fill="none" stroke="#3a3f47" stroke-width="1.800"/></g>
</defs>
<rect x="0" y="145" width="300" height="25" fill="#3c4553"/>
<path d="M9.500 155.200l-3 2.600 3 2.600zM14 155.200l-3 2.600 3 2.600z" fill="#8d949e"/>
<rect x="279" y="156" width="8" height="1.800" fill="#c9cdd3"/>
<rect x="0" y="830" width="300" height="25" fill="#3c4553"/>
<path d="M279 842h8M283 838v8" stroke="#c9cdd3" stroke-width="1.600"/>
<rect x="4" y="318" width="6" height="160" rx="2" fill="#b6b7be"/>
<rect x="54" y="175" width="119" height="20" fill="#3c4553"/>
<use href="#ar" x="40" y="184"/>
<use href="#eyeh" x="65" y="185"/>
<use href="#comp" x="90" y="185"/>
<rect x="54" y="199" width="158.7" height="20" fill="#3c4553"/>
<use href="#ar" x="40" y="208"/>
<use href="#eyeh" x="65" y="209"/>
<use href="#comp" x="90" y="209"/>
<rect x="54" y="223" width="164" height="20" fill="#3c4553"/>
<rect x="79" y="223" width="114" height="20" fill="#252c37"/>
<circle cx="204" cy="233" r="4.400" fill="none" stroke="#fff" stroke-width="3.400"/>
<use href="#ad" x="40" y="233"/>
<use href="#eyev" x="65" y="233"/>
<use href="#comp" x="90" y="233"/>
<rect x="72" y="247" width="111" height="20" fill="#3c4553"/>
<use href="#ar" x="58" y="256"/>
<use href="#eyeh" x="83" y="257"/>
<use href="#fold" x="108" y="257"/>
<rect x="72" y="271" width="98.7" height="20" fill="#3c4553"/>
<use href="#ad" x="58" y="281"/>
<use href="#eyev" x="83" y="281"/>
<use href="#fold" x="108" y="281"/>
<rect x="90" y="295" width="106.5" height="20" fill="#3c4553"/>
<use href="#eyev" x="101" y="305"/>
<use href="#body" x="126" y="305"/>
<rect x="90" y="319" width="106.5" height="20" fill="#3c4553"/>
<use href="#eyev" x="101" y="329"/>
<use href="#body" x="126" y="329"/>
<rect x="90" y="343" width="106.5" height="20" fill="#3c4553"/>
<use href="#eyev" x="101" y="353"/>
<use href="#body" x="126" y="353"/>
<rect x="90" y="367" width="106.5" height="20" fill="#3c4553"/>
<use href="#eyev" x="101" y="377"/>
<use href="#body" x="126" y="377"/>
<rect x="90" y="391" width="106.5" height="20" fill="#3c4553"/>
<use href="#eyev" x="101" y="401"/>
<use href="#body" x="126" y="401"/>
<rect x="90" y="415" width="106.5" height="20" fill="#3c4553"/>
<use href="#eyev" x="101" y="425"/>
<use href="#body" x="126" y="425"/>
<rect x="90" y="439" width="110.7" height="20" fill="#3c4553"/>
<use href="#eyev" x="101" y="449"/>
<use href="#body" x="126" y="449"/>
<rect x="90" y="463" width="110.7" height="20" fill="#3c4553"/>
<use href="#eyev" x="101" y="473"/>
<use href="#body" x="126" y="473"/>
<rect x="90" y="487" width="110.7" height="20" fill="#3c4553"/>
<use href="#eyev" x="101" y="497"/>
<use href="#body" x="126" y="497"/>
<rect x="90" y="511" width="110.7" height="20" fill="#3c4553"/>
<use href="#eyev" x="101" y="521"/>
<use href="#body" x="126" y="521"/>
<rect x="90" y="535" width="110.7" height="20" fill="#3c4553"/>
<use href="#eyev" x="101" y="545"/>
<use href="#body" x="126" y="545"/>
<rect x="72" y="559" width="123" height="20" fill="#3c4553"/>
<use href="#ad" x="58" y="569"/>
<use href="#eyeh" x="83" y="569"/>
<use href="#fold" x="108" y="569"/>
<rect x="90" y="583" width="122.7" height="20" fill="#3c4553"/>
<use href="#eyed" x="101" y="593"/>
<use href="#sk" x="126" y="593"/>
<rect x="90" y="607" width="122.7" height="20" fill="#3c4553"/>
<use href="#eyed" x="101" y="617"/>
<use href="#sk" x="126" y="617"/>
<rect x="90" y="631" width="122.7" height="20" fill="#3c4553"/>
<use href="#eyed" x="101" y="641"/>
<use href="#sk" x="126" y="641"/>
<rect x="90" y="655" width="126.7" height="20" fill="#3c4553"/>
<use href="#eyed" x="101" y="665"/>
<use href="#sk" x="126" y="665"/>
<rect x="90" y="679" width="122.7" height="20" fill="#3c4553"/>
<use href="#eyed" x="101" y="689"/>
<use href="#sk" x="126" y="689"/>
<rect x="90" y="703" width="122.7" height="20" fill="#3c4553"/>
<use href="#eyed" x="101" y="713"/>
<use href="#sk" x="126" y="713"/>
<rect x="90" y="727" width="126.7" height="20" fill="#3c4553"/>
<use href="#eyed" x="101" y="737"/>
<use href="#sk" x="126" y="737"/>
<rect x="90" y="751" width="126.7" height="20" fill="#3c4553"/>
<use href="#eyed" x="101" y="761"/>
<use href="#sk" x="126" y="761"/>
<rect x="90" y="775" width="122.7" height="20" fill="#3c4553"/>
<use href="#eyed" x="101" y="785"/>
<use href="#sk" x="126" y="785"/>
<rect x="90" y="799" width="130.7" height="20" fill="#3c4553"/>
<use href="#eyed" x="101" y="809"/>
<use href="#sk" x="126" y="809"/>
<path d="M98 576.800h92" stroke="#46a6e6" stroke-width="2.400" stroke-dasharray="3.500 3.200"/>
</svg>
<div class="abs lbl" id="n0" style="left:112px;top:179px;color:#eceef0;letter-spacing:0.07px">clecepa:1</div>
<div class="abs lbl" id="n1" style="left:112px;top:203px;color:#eceef0;letter-spacing:0.344px">maintien yoke:1</div>
<div class="abs lbl" id="n2" style="left:112px;top:227px;color:#eceef0;letter-spacing:-0.21px;font-weight:bold;color:#fff">rudder pad:1</div>
<div class="abs lbl" id="n3" style="left:130px;top:251px;color:#eceef0;letter-spacing:0.33px">Origine</div>
<div class="abs lbl" id="n4" style="left:130px;top:275px;color:#eceef0;letter-spacing:-0.12px">Corps</div>
<div class="abs lbl" id="n5" style="left:148px;top:299px;color:#eceef0;letter-spacing:-0.148px">Corps1</div>
<div class="abs lbl" id="n6" style="left:148px;top:323px;color:#eceef0;letter-spacing:-0.148px">Corps4</div>
<div class="abs lbl" id="n7" style="left:148px;top:347px;color:#eceef0;letter-spacing:-0.148px">Corps5</div>
<div class="abs lbl" id="n8" style="left:148px;top:371px;color:#eceef0;letter-spacing:-0.148px">Corps6</div>
<div class="abs lbl" id="n9" style="left:148px;top:395px;color:#eceef0;letter-spacing:-0.148px">Corps7</div>
<div class="abs lbl" id="n10" style="left:148px;top:419px;color:#eceef0;letter-spacing:-0.148px">Corps2</div>
<div class="abs lbl" id="n11" style="left:148px;top:443px;color:#eceef0;letter-spacing:-0.294px">Corps15</div>
<div class="abs lbl" id="n12" style="left:148px;top:467px;color:#eceef0;letter-spacing:-0.294px">Corps22</div>
<div class="abs lbl" id="n13" style="left:148px;top:491px;color:#eceef0;letter-spacing:-0.294px">Corps23</div>
<div class="abs lbl" id="n14" style="left:148px;top:515px;color:#eceef0;letter-spacing:-0.294px">Corps25</div>
<div class="abs lbl" id="n15" style="left:148px;top:539px;color:#eceef0;letter-spacing:-0.294px">Corps27</div>
<div class="abs lbl" id="n16" style="left:130px;top:563px;color:#eceef0;letter-spacing:0.1px">Esquisses</div>
<div class="abs lbl" id="n17" style="left:148px;top:587px;color:#eceef0;letter-spacing:0.025px">Esquisse1</div>
<div class="abs lbl" id="n18" style="left:148px;top:611px;color:#eceef0;letter-spacing:0.025px">Esquisse2</div>
<div class="abs lbl" id="n19" style="left:148px;top:635px;color:#eceef0;letter-spacing:0.025px">Esquisse3</div>
<div class="abs lbl" id="n20" style="left:148px;top:659px;color:#eceef0;letter-spacing:0.025px">Esquisse4</div>
<div class="abs lbl" id="n21" style="left:148px;top:683px;color:#eceef0;letter-spacing:0.025px">Esquisse7</div>
<div class="abs lbl" id="n22" style="left:148px;top:707px;color:#eceef0;letter-spacing:0.025px">Esquisse5</div>
<div class="abs lbl" id="n23" style="left:148px;top:731px;color:#eceef0;letter-spacing:0.025px">Esquisse6</div>
<div class="abs lbl" id="n24" style="left:148px;top:755px;color:#eceef0;letter-spacing:0.025px">Esquisse8</div>
<div class="abs lbl" id="n25" style="left:148px;top:779px;color:#eceef0;letter-spacing:0.025px">Esquisse9</div>
<div class="abs lbl" id="n26" style="left:148px;top:803px;color:#eceef0;letter-spacing:-0.116px">Esquisse11</div>
<div class="abs lbl" id="t_nav" style="left:28px;top:151.500px;transform:scaleX(0.954);transform-origin:0 0">NAVIGATEUR</div>
<div class="abs lbl" id="t_com" style="left:28px;top:836.500px;transform:scaleX(0.949);transform-origin:0 0">COMMENTAIRES</div>
<!--/NAV-->




</div>
</body>
</html>
